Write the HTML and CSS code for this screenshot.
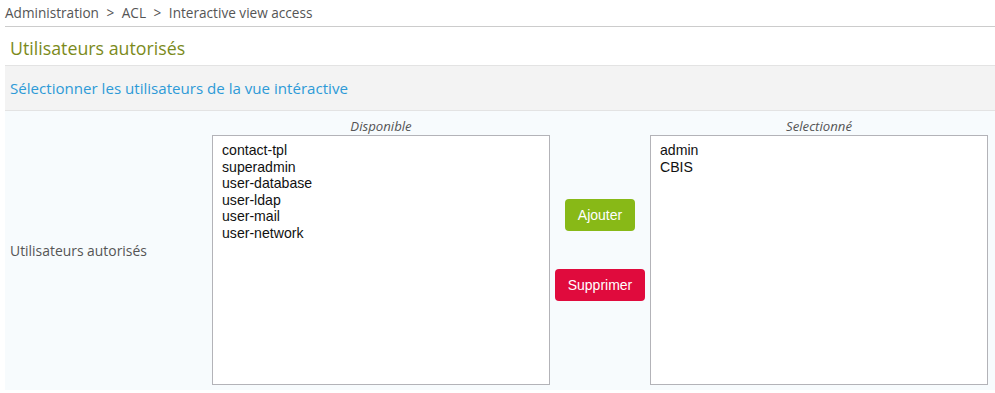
FILE: index.html
```html
<!DOCTYPE html>
<html lang="fr">
<head>
<meta charset="utf-8">
<title>Interactive view access</title>
<link rel="stylesheet" href="styles.css">
</head>
<body>
<div class="breadcrumb">Administration <span class="sep">&gt;</span> ACL <span class="sep">&gt;</span> Interactive view access</div>
<h1 class="title">Utilisateurs autorisés</h1>
<div class="band">Sélectionner les utilisateurs de la vue intéractive</div>
<div class="panel">
  <div class="label">Utilisateurs autorisés</div>
  <div class="listcol">
    <div class="listhead">Disponible</div>
    <div class="listbox">
      <div>contact-tpl</div>
      <div>superadmin</div>
      <div>user-database</div>
      <div>user-ldap</div>
      <div>user-mail</div>
      <div>user-network</div>
    </div>
  </div>
  <div class="actions">
    <button class="btn btn-add">Ajouter</button>
    <button class="btn btn-del">Supprimer</button>
  </div>
  <div class="listcol">
    <div class="listhead">Selectionné</div>
    <div class="listbox">
      <div>admin</div>
      <div>CBIS</div>
    </div>
  </div>
</div>
</body>
</html>
```
FILE: styles.css
```css
* { box-sizing: border-box; }
body {
  margin: 0;
  font-family: "Open Sans", "Liberation Sans", sans-serif;
  background: #fff;
  color: #555;
}
.breadcrumb {
  margin-left: 5px;
  height: 27px;
  border-bottom: 1px solid #cccccc;
  font-size: 13.6px;
  line-height: 25px;
  color: #555;
}
.breadcrumb .sep { margin: 0 4px; }
.title {
  margin: 0;
  height: 38px;
  padding-left: 10px;
  font-size: 17.8px;
  font-weight: normal;
  line-height: 42px;
  color: #7b8a1b;
}
.band {
  margin-left: 5px;
  height: 46px;
  background: #f3f3f3;
  border-top: 1px solid #e3e3e3;
  border-bottom: 1px solid #e3e3e3;
  padding-left: 5px;
  font-size: 15.1px;
  line-height: 44px;
  color: #2d9ad7;
}
.panel {
  margin-left: 5px;
  height: 279px;
  background: #f7fbfd;
  display: flex;
  align-items: stretch;
}
.label {
  width: 207px;
  padding-left: 5px;
  display: flex;
  align-items: center;
  font-size: 13.9px;
  color: #555;
}
.listcol {
  width: 338px;
  display: flex;
  flex-direction: column;
  padding-top: 6px;
}
.listhead {
  height: 18px;
  text-align: center;
  font-style: italic;
  font-size: 13.2px;
  line-height: 18px;
  color: #555;
}
.listbox {
  height: 250px;
  background: #fff;
  border: 1px solid #b3b3b8;
  padding: 6px 9px;
  font-family: "Liberation Sans", Arial, sans-serif;
  font-size: 14.1px;
  line-height: 16.6px;
  color: #111;
}
.actions {
  width: 100px;
  display: flex;
  flex-direction: column;
  align-items: center;
  padding-top: 88px;
  gap: 38px;
}
.btn {
  height: 32px;
  border: none;
  border-radius: 4px;
  color: #fff;
  font-family: "Liberation Sans", Arial, sans-serif;
  font-size: 14px;
  padding: 0;
}
.btn-add { width: 70px; background: #88b917; }
.btn-del { width: 90px; background: #e00b3d; }
```
